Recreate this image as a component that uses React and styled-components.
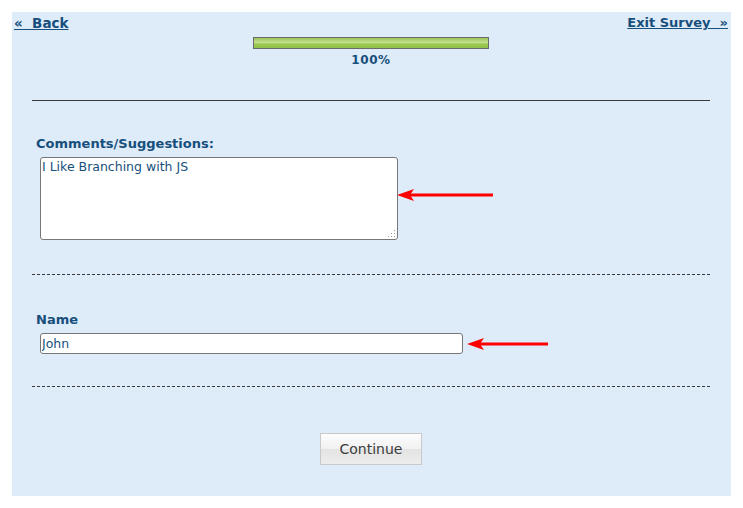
import React from 'react';
import styled, { createGlobalStyle } from 'styled-components';

const GlobalStyle = createGlobalStyle`
  body {
    margin: 0;
    background: #fff;
    font-family: 'DejaVu Sans', Verdana, sans-serif;
  }
`;

const Panel = styled.div`
  margin: 12px 0 0 12px;
  width: 719px;
  height: 484px;
  background: #deebf9;
  padding: 3px 3px 0 2px;
  box-sizing: border-box;
  color: #174f7c;
`;

const TopBar = styled.div`
  display: flex;
  justify-content: space-between;
  height: 16px;
  font-size: 13.5px;
  font-weight: bold;
  line-height: 16px;
`;

const NavLink = styled.a`
  display: block;
  color: #174f7c;
  font-size: ${p => p.$size}px;
  line-height: 16px;
  text-decoration: underline;
  white-space: pre;
  cursor: pointer;
`;

const Progress = styled.div`
  display: flex;
  flex-direction: column;
  align-items: center;
  margin-top: 6px;
`;

const Track = styled.div`
  width: 236px;
  height: 12px;
  box-sizing: border-box;
  border: 1px solid #6b6b6b;
  background: linear-gradient(#9cc45a, #c4df8f 45%, #9ccb52 60%, #8fbf48);
`;

const Percent = styled.div`
  font-size: 12px;
  font-weight: bold;
  line-height: 14px;
  margin-top: 4px;
  letter-spacing: 0.6px;
`;

const Rule = styled.hr`
  margin: ${p => p.$top}px 18px 0 18px;
  border: 0;
  border-top: 1px ${p => (p.$dashed ? 'dashed' : 'solid')} #3a3a3a;
  height: 0;
`;

const Question = styled.div`
  padding: ${p => p.$top}px 0 0 22px;
`;

const Label = styled.div`
  font-size: 13px;
  font-weight: bold;
  line-height: 16px;
  margin-bottom: 5px;
`;

const FieldRow = styled.div`
  display: flex;
  align-items: center;
  padding-left: 4px;
`;

const AreaWrap = styled.div`
  position: relative;
  display: flex;
`;

const TextArea = styled.textarea`
  width: 358px;
  height: 83px;
  box-sizing: border-box;
  border: 1px solid #777;
  border-radius: 3px;
  padding: 1px;
  font-family: 'DejaVu Sans', sans-serif;
  font-size: 12.5px;
  line-height: 15px;
  color: #174f7c;
  background: #fff;
  resize: none;
  outline: none;
`;

const Grip = styled.svg`
  position: absolute;
  right: 2px;
  bottom: 2px;
  pointer-events: none;
`;

const Input = styled.input`
  width: 423px;
  height: 21px;
  box-sizing: border-box;
  border: 1px solid #777;
  border-radius: 3px;
  padding: 0 1px;
  font-family: 'DejaVu Sans', sans-serif;
  font-size: 12.5px;
  color: #174f7c;
  background: #fff;
  outline: none;
`;

const ArrowSvg = styled.svg`
  display: block;
  margin-left: ${p => p.$offset}px;
  margin-bottom: ${p => p.$lift}px;
`;

const Footer = styled.div`
  display: flex;
  justify-content: center;
  padding-top: 46px;
`;

const Button = styled.button`
  width: 102px;
  height: 32px;
  border: 1px solid #c9c9c9;
  background: linear-gradient(#fdfdfd, #f1f1f1 50%, #e4e4e4 51%, #ececec);
  font-family: 'DejaVu Sans', sans-serif;
  font-size: 14px;
  color: #3c3c3c;
  cursor: pointer;
`;

function Arrow({ length, offset, lift = 0 }) {
  return (
    <ArrowSvg $offset={offset} $lift={lift} width={length} height={14} viewBox={`0 0 ${length} 14`}>
      <line x1={12} y1={7} x2={length} y2={7} stroke="#f00" strokeWidth={3} />
      <polygon points="0,7 17,1 13,7 17,13" fill="#f00" />
    </ArrowSvg>
  );
}

const gripDots = [
  [7, 1], [4, 4], [7, 4], [1, 7], [4, 7], [7, 7],
];

export default function App() {
  return (
    <>
      <GlobalStyle />
      <Panel>
        <TopBar>
          <NavLink $size={13.5}>{'«  Back'}</NavLink>
          <NavLink $size={13}>{'Exit Survey  »'}</NavLink>
        </TopBar>
        <Progress>
          <Track />
          <Percent>100%</Percent>
        </Progress>
        <Rule $top={33} />
        <Question $top={35}>
          <Label>Comments/Suggestions:</Label>
          <FieldRow>
            <AreaWrap>
              <TextArea defaultValue="I Like Branching with JS" spellCheck={false} />
              <Grip width={9} height={9} viewBox="0 0 9 9">
                {gripDots.map(([x, y], i) => (
                  <rect key={i} x={x} y={y} width={1} height={1} fill="#999" />
                ))}
              </Grip>
            </AreaWrap>
            <Arrow length={96} offset={-1} lift={8} />
          </FieldRow>
        </Question>
        <Rule $top={34} $dashed />
        <Question $top={37}>
          <Label>Name</Label>
          <FieldRow>
            <Input defaultValue="John" spellCheck={false} />
            <Arrow length={81} offset={4} />
          </FieldRow>
        </Question>
        <Rule $top={32} $dashed />
        <Footer>
          <Button>Continue</Button>
        </Footer>
      </Panel>
    </>
  );
}
